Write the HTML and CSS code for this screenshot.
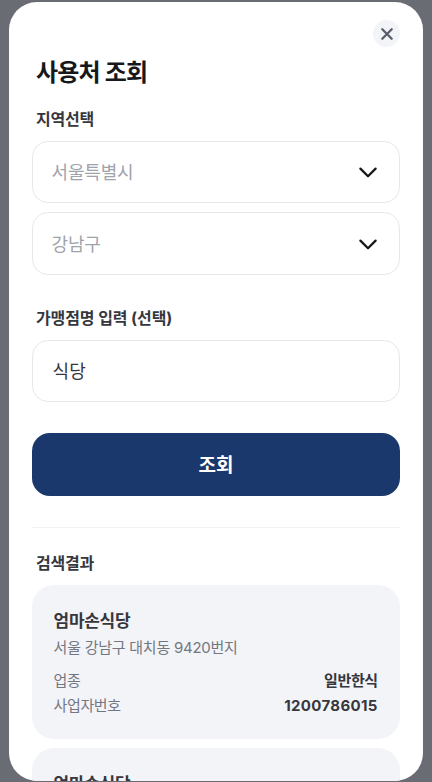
FILE: index.html
```
<!DOCTYPE html>
<html lang="ko">
<head>
<meta charset="UTF-8">
<meta name="viewport" content="width=device-width, initial-scale=1.0">
<title>사용처 조회</title>
<link rel="stylesheet" href="styles.css">
</head>
<body>
<div class="modal">
    <div class="modal-top">
        <button type="button" class="close-btn" aria-label="닫기">
            <svg width="14" height="14" viewBox="0 0 14 14"><path d="M2.3 2.3l9.4 9.4M11.7 2.3l-9.4 9.4"/></svg>
        </button>
    </div>
    <h1>사용처 조회</h1>

    <form class="search-form" action="#">
        <p class="label">지역선택</p>
        <div class="field select">
            <span>서울특별시</span>
            <svg width="20" height="14" viewBox="0 0 20 14"><path d="M2.4 3.6l7.6 7.6 7.6-7.6"/></svg>
        </div>
        <div class="field select">
            <span>강남구</span>
            <svg width="20" height="14" viewBox="0 0 20 14"><path d="M2.4 3.6l7.6 7.6 7.6-7.6"/></svg>
        </div>

        <label class="label name-label" for="storeName">가맹점명 입력 (선택)</label>
        <input class="field" type="text" id="storeName" value="식당">
        <button type="button" class="submit-btn">조회</button>
    </form>

    <div class="results">
        <h2 class="label">검색결과</h2>
        <div class="card">
            <h3>엄마손식당</h3>
            <p class="address">서울 강남구 대치동 9420번지</p>
            <div class="row"><span>업종</span><strong>일반한식</strong></div>
            <div class="row"><span>사업자번호</span><strong class="number">1200786015</strong></div>
        </div>
        <div class="card">
            <h3>엄마손식당</h3>
        </div>
    </div>
</div>
</body>
</html>
```

FILE: styles.css
```
:root {
    --navy: #1a386b;
    --dim: #6a6c74;
    --dark: #17181b;
    --text: #36373d;
    --gray: #737782;
    --light: #a0a3ac;
    --line: #e7e7e9;
    --card: #f3f4f8;
}

* {
    box-sizing: border-box;
}

body {
    margin: 0;
    height: 100vh;
    padding: 2px 9.3px 1px 9.3px;
    overflow: hidden;
    background-color: var(--dim);
    font-family: Inter, "Noto Sans CJK KR", sans-serif;
    color: var(--text);
}

h1, h2, h3, p {
    margin: 0;
}

.modal {
    height: 100%;
    padding: 18px 22.5px 0 22.3px;
    border-radius: 28px;
    background-color: #fff;
    overflow: hidden;
}

.modal-top {
    display: flex;
    justify-content: flex-end;
}

.close-btn {
    display: flex;
    align-items: center;
    justify-content: center;
    width: 27px;
    height: 27px;
    padding: 0;
    border: none;
    border-radius: 50%;
    background-color: var(--card);
}

.close-btn svg {
    fill: none;
    stroke: #595d6b;
    stroke-width: 2.3;
    stroke-linecap: round;
}

h1 {
    margin: 10px 0 0 4.4px;
    font-size: 24px;
    line-height: 32px;
    font-weight: 700;
    letter-spacing: -0.8px;
    color: var(--dark);
}

.label {
    display: block;
    margin-left: 4.4px;
    font-size: 16px;
    line-height: 24px;
    font-weight: 700;
    letter-spacing: -0.2px;
}

.search-form .label {
    margin-top: 18px;
    margin-bottom: 10px;
}

.search-form .name-label {
    margin-top: 31.5px;
    letter-spacing: -0.1px;
}

.field {
    display: flex;
    align-items: center;
    justify-content: space-between;
    width: 100%;
    height: 62.2px;
    padding: 0 21px 2px 20px;
    border: 1.3px solid var(--line);
    border-radius: 16px;
    background-color: #fff;
    font-family: inherit;
    font-size: 18px;
    color: var(--text);
}

.field + .field {
    margin-top: 9.3px;
}

.select {
    padding: 0 21px 0 19px;
    color: var(--light);
    letter-spacing: -0.2px;
}

.select span {
    padding-bottom: 2px;
}

.select svg {
    fill: none;
    stroke: #17181b;
    stroke-width: 2.3;
    stroke-linecap: round;
    stroke-linejoin: round;
}

.submit-btn {
    width: 100%;
    height: 63px;
    margin-top: 31px;
    padding: 0 0 3px;
    border: none;
    border-radius: 18px;
    background-color: var(--navy);
    font-family: inherit;
    font-size: 19px;
    font-weight: 700;
    color: #fff;
}

.results {
    margin-top: 31px;
    padding-top: 22.5px;
    border-top: 1px solid #f3f3f5;
}

.results .label {
    margin-bottom: 10px;
}

.card {
    height: 154px;
    padding: 23px 22.5px 0 22px;
    border-radius: 22px;
    background-color: var(--card);
}

.card + .card {
    margin-top: 9px;
}

.card h3 {
    font-size: 17px;
    line-height: 26px;
    font-weight: 700;
    letter-spacing: -0.3px;
}

.address,
.row {
    font-size: 15px;
    line-height: 24.5px;
    letter-spacing: -0.4px;
    color: var(--gray);
}

.address {
    margin: 2px 0 9px;
    letter-spacing: -0.25px;
}

.row {
    display: flex;
    justify-content: space-between;
}

.row strong {
    font-weight: 700;
    color: var(--text);
}

.row .number {
    letter-spacing: 0.35px;
}
```
